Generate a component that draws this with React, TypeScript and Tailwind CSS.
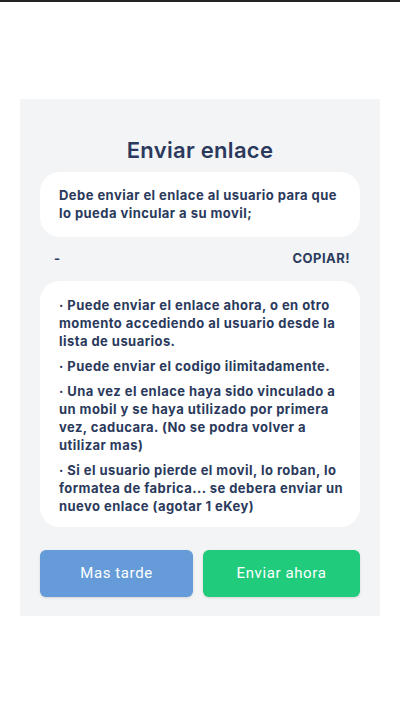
export default function App() {
  return (
    <div className="min-h-[714px] w-[400px] bg-white border-t-2 border-[#222]">
      <div className="mx-5 mt-[97px] bg-[#f3f4f6] px-5 pt-[37px] pb-[19px] text-[#2b3a5c] font-['Inter',sans-serif]">
        <h1 className="text-center text-[22px] font-semibold leading-[28px] tracking-[0.3px]">Enviar enlace</h1>
        <div className="mt-[8px] rounded-[20px] bg-white pl-[19px] pr-[14px] pt-[14px] pb-[15px] text-[13px] font-bold leading-[18px] tracking-[0.45px]">
          Debe enviar el enlace al usuario para que lo pueda vincular a su movil;
        </div>
        <div className="flex items-center justify-between pl-[14px] pr-[10px] pt-[12px] pb-[14px] text-[13px] font-bold leading-[18px] tracking-[0.45px]">
          <span>-</span>
          <span>COPIAR!</span>
        </div>
        <div className="flex flex-col gap-[7px] rounded-[20px] bg-white pl-[19px] pr-[12px] pt-[15px] pb-[12px] text-[13px] font-bold leading-[18px] tracking-[0.45px]">
          <p>· Puede enviar el enlace ahora, o en otro momento accediendo al usuario desde la lista de usuarios.</p>
          <p>· Puede enviar el codigo ilimitadamente.</p>
          <p>· Una vez el enlace haya sido vinculado a un mobil y se haya utilizado por primera vez, caducara. (No se podra volver a utilizar mas)</p>
          <p>· Si el usuario pierde el movil, lo roban, lo formatea de fabrica... se debera enviar un nuevo enlace (agotar 1 eKey)</p>
        </div>
        <div className="mt-[23px] flex gap-[10px] font-['Roboto',sans-serif] text-[15px] font-normal tracking-[0.6px] text-white">
          <button className="h-[47px] w-[153px] rounded-[6px] bg-[#659bd9] shadow-sm">Mas tarde</button>
          <button className="h-[47px] flex-1 rounded-[6px] bg-[#20cc7c] shadow-sm">Enviar ahora</button>
        </div>
      </div>
    </div>
  );
}
